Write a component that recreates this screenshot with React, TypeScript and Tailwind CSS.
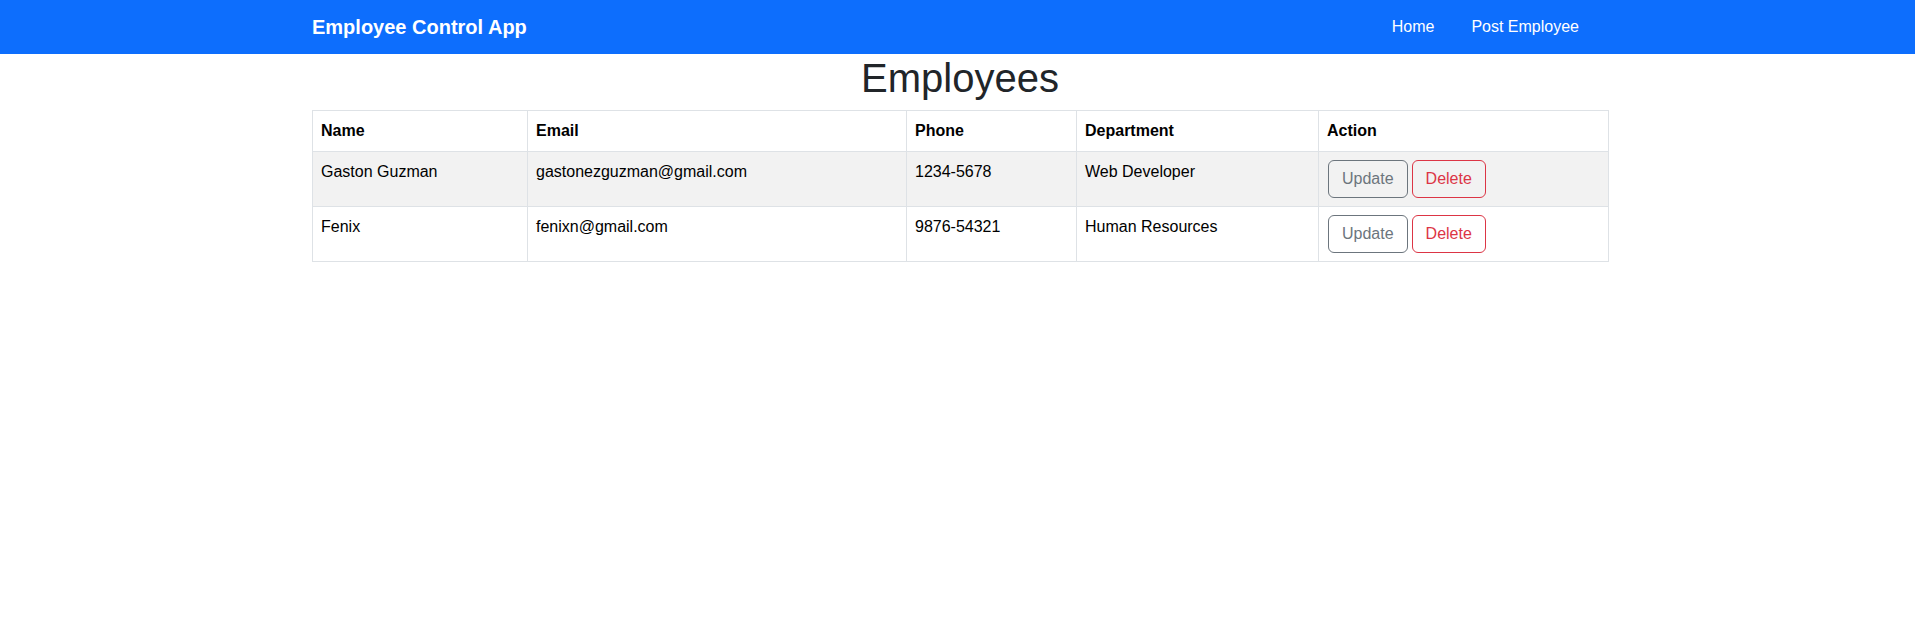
const employees = [
  {
    id: 1,
    name: "Gaston Guzman",
    email: "gastonezguzman@gmail.com",
    phone: "1234-5678",
    department: "Web Developer",
  },
  {
    id: 2,
    name: "Fenix",
    email: "fenixn@gmail.com",
    phone: "9876-54321",
    department: "Human Resources",
  },
];

const Navbar = () => (
  <nav className="h-[54px] bg-[#0d6efd]">
    <div className="ml-[312px] w-[1296px] h-full flex items-center justify-between">
      <a className="text-white text-[20px] leading-[30px] font-bold">Employee Control App</a>
      <ul className="flex items-center gap-[37px] pr-[29px] text-white text-[16px] leading-6">
        <li>Home</li>
        <li>Post Employee</li>
      </ul>
    </div>
  </nav>
);

const App = () => {
  return (
    <div className="min-h-screen bg-white font-['Liberation_Sans',Arial,sans-serif]">
      <Navbar />
      <div className="ml-[312px] w-[1296px]">
        <h1 className="text-center text-[40px] leading-[48px] font-medium text-[#212529] mb-2">
          Employees
        </h1>
        <table className="w-full table-fixed border-collapse border border-[#dee2e6] text-[16px] leading-6 text-black">
          <colgroup>
            <col className="w-[215px]" />
            <col className="w-[379px]" />
            <col className="w-[170px]" />
            <col className="w-[242px]" />
            <col className="w-[290px]" />
          </colgroup>
          <thead>
            <tr>
              {["Name", "Email", "Phone", "Department", "Action"].map((h) => (
                <th
                  key={h}
                  className="border border-[#dee2e6] p-2 text-left font-bold align-top"
                >
                  {h}
                </th>
              ))}
            </tr>
          </thead>
          <tbody>
            {employees.map((emp, i) => (
              <tr key={emp.id} className={i % 2 === 0 ? "bg-[#f2f2f2]" : "bg-white"}>
                <td className="border border-[#dee2e6] p-2 align-top">{emp.name}</td>
                <td className="border border-[#dee2e6] p-2 align-top">{emp.email}</td>
                <td className="border border-[#dee2e6] p-2 align-top">{emp.phone}</td>
                <td className="border border-[#dee2e6] p-2 align-top">{emp.department}</td>
                <td className="border border-[#dee2e6] p-2 align-top">
                  <div className="flex gap-[4px] pl-px">
                    <button className="px-[13px] py-1.5 border border-[#6c757d] text-[#6c757d] rounded-md leading-6">
                      Update
                    </button>
                    <button className="px-[13px] py-1.5 border border-[#dc3545] text-[#dc3545] rounded-md leading-6">
                      Delete
                    </button>
                  </div>
                </td>
              </tr>
            ))}
          </tbody>
        </table>
      </div>
    </div>
  );
};

export default App;
